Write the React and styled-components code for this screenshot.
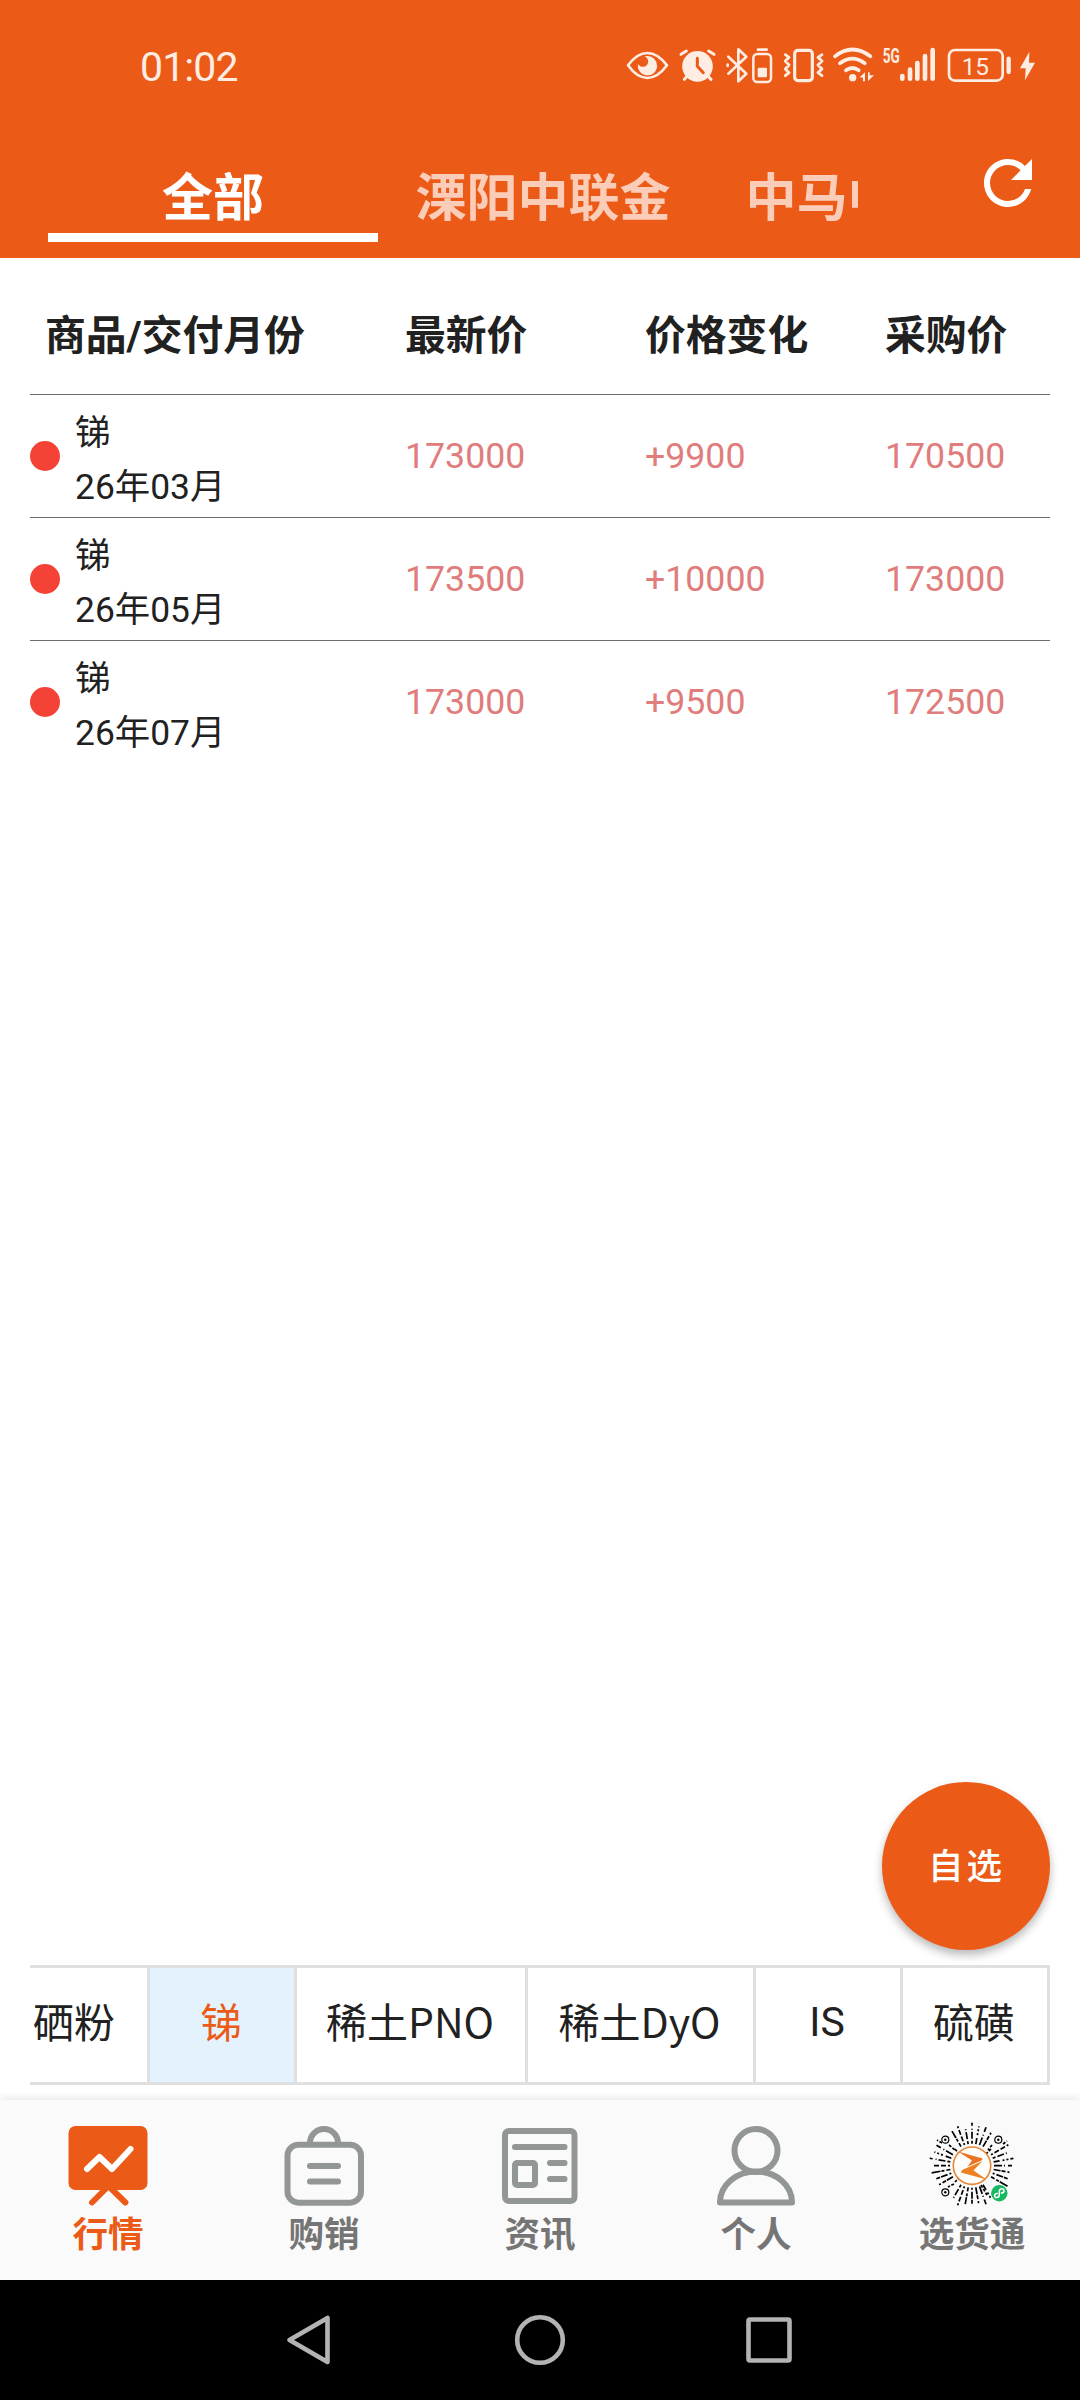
import styled, { createGlobalStyle, ThemeProvider } from 'styled-components';

const theme = {
  primary: '#eb5b17',
  statusIcon: '#ffece2',
  text: '#212121',
  price: '#e07c7c',
  dot: '#f44336',
  divider: '#6c6c6c',
  border: '#e0e0e0',
  selected: '#e3f2fd',
  navBackground: '#fafafa',
  navText: '#757575',
  navIcon: '#929796',
  fonts: {
    main: "Roboto, 'Noto Sans CJK SC', sans-serif",
    cjk: "'Noto Sans CJK SC', sans-serif",
  },
};

const GlobalStyle = createGlobalStyle`
  * {
    box-sizing: border-box;
  }

  body {
    margin: 0;
    background: #fff;
  }
`;

const Screen = styled.div`
  position: relative;
  width: 1080px;
  height: 2400px;
  display: flex;
  flex-direction: column;
  overflow: hidden;
  background: #fff;
  color: ${({ theme }) => theme.text};
  font-family: ${({ theme }) => theme.fonts.main};
`;

const Header = styled.header`
  height: 258px;
  flex: none;
  display: flex;
  flex-direction: column;
  background: ${({ theme }) => theme.primary};
`;

const StatusBar = styled.div`
  height: 130px;
  display: flex;
  align-items: center;
  justify-content: space-between;
  padding: 0 40px 0 140px;
  color: ${({ theme }) => theme.statusIcon};
`;

const Clock = styled.span`
  font-size: 41px;
  letter-spacing: -0.9px;
  line-height: 48px;
  padding-top: 4px;
`;

const StatusIcons = styled.div`
  display: flex;
  align-items: center;
`;

const StatusSvg = styled.svg`
  display: block;
  height: 40px;
  fill: none;
  stroke: currentColor;
  stroke-linecap: round;
  stroke-linejoin: round;
`;

const TabRow = styled.div`
  flex: 1;
  display: flex;
  justify-content: space-between;
  padding: 0 36px 16px 48px;
`;

const Tabs = styled.nav`
  width: 810px;
  display: flex;
  overflow: hidden;
`;

const Tab = styled.button`
  flex: none;
  min-width: ${({ $active }) => ($active ? '330px' : '0')};
  padding: 24px 37.5px 0;
  border: 0;
  border-bottom: 9px solid ${({ $active }) => ($active ? '#fff' : 'transparent')};
  background: none;
  color: ${({ $active }) => ($active ? '#fff' : '#fbcdb8')};
  font: 700 51px/70px ${({ theme }) => theme.fonts.cjk};
  white-space: nowrap;
`;

const RefreshButton = styled.button`
  width: 72px;
  height: 72px;
  margin-top: 17px;
  padding: 0;
  border: 0;
  background: none;
  color: #fff;
`;

const Quotes = styled.main`
  flex: 1;
  padding: 0 30px;
`;

const QuoteGrid = styled.div`
  display: grid;
  grid-template-columns: 375px 240px 240px 1fr;
  align-items: center;
`;

const QuoteHeader = styled(QuoteGrid)`
  height: 136px;
  padding-top: 19px;
  font: 700 40.8px/60px ${({ theme }) => theme.fonts.main};
`;

const HeaderCell = styled.span`
  padding-left: ${({ $first }) => ($first ? '15px' : '0')};
`;

const QuoteRow = styled(QuoteGrid)`
  height: 123px;
  border-top: 1px solid ${({ theme }) => theme.divider};
  font-size: 35.7px;
`;

const Product = styled.div`
  display: flex;
  align-items: center;
  gap: 15px;
`;

const Dot = styled.span`
  width: 30px;
  height: 30px;
  border-radius: 50%;
  background: ${({ theme }) => theme.dot};
`;

const ProductText = styled.div`
  padding-top: 8px;
  font-size: 35.4px;
  line-height: 54px;
`;

const Price = styled.span`
  color: ${({ theme }) => theme.price};
`;

const WatchButton = styled.button`
  position: absolute;
  right: 30px;
  bottom: 450px;
  width: 168px;
  height: 168px;
  padding: 0 0 4px 1px;
  border: 0;
  border-radius: 50%;
  background: ${({ theme }) => theme.primary};
  box-shadow: 0 5px 10px rgba(0, 0, 0, 0.28);
  color: #fff;
  font: 500 35.5px/54px ${({ theme }) => theme.fonts.cjk};
  letter-spacing: 3px;
`;

const Categories = styled.div`
  height: 120px;
  flex: none;
  display: flex;
  justify-content: flex-end;
  margin: 0 30px 15px;
  overflow: hidden;
  border: solid ${({ theme }) => theme.border};
  border-width: 3px 0;
`;

const Category = styled.button`
  flex: none;
  width: ${({ $wide }) => $wide || 147}px;
  padding: 0 2px ${({ $latin }) => ($latin ? '6px' : '11px')} 0;
  border: 0;
  border-right: 3px solid ${({ theme }) => theme.border};
  background: ${({ theme, $selected }) => ($selected ? theme.selected : '#fff')};
  color: ${({ theme, $selected }) => ($selected ? theme.primary : theme.text)};
  font: 400 41px/60px ${({ theme, $latin }) => ($latin ? theme.fonts.main : theme.fonts.cjk)};
  white-space: nowrap;
`;

const BottomNav = styled.nav`
  height: 180px;
  flex: none;
  display: grid;
  grid-template-columns: repeat(5, 1fr);
  background: ${({ theme }) => theme.navBackground};
  box-shadow: 0 -2px 8px rgba(0, 0, 0, 0.1);
`;

const NavItem = styled.a`
  display: flex;
  flex-direction: column;
  align-items: center;
  padding-top: 21px;
  color: ${({ theme, $active }) => ($active ? theme.primary : theme.navText)};
  font: 700 35.6px/54px ${({ theme }) => theme.fonts.cjk};
`;

const NavSvg = styled.svg`
  width: 90px;
  height: 90px;
  flex: none;
  margin-bottom: -6px;
  fill: none;
  stroke: ${({ theme }) => theme.navIcon};
  stroke-width: 6;
  stroke-linecap: round;
  stroke-linejoin: round;
`;

const SystemNav = styled.div`
  height: 120px;
  flex: none;
  display: flex;
  align-items: center;
  justify-content: center;
  gap: 169px;
  background: #000;
`;

const SystemSvg = styled.svg`
  width: 60px;
  height: 60px;
  fill: none;
  stroke: #b3b3b3;
  stroke-width: 4.6;
  stroke-linejoin: round;
`;

const StatusIcon = ({ x, width, children }) => (
  <StatusSvg viewBox={`${x} 75 ${width} 120`} width={width / 3}>
    {children}
  </StatusSvg>
);

const StatusGlyphs = () => (
  <StatusIcons>
    <StatusIcon x={78} width={144}>
      <path d="M84 136Q111 99 142 99T201 136Q173 174 142 174T84 136Z" strokeWidth="8" />
      <path d="M142 108A29 29 0 1 1 114 131A16 16 0 1 0 133 109Q137 108 142 108Z" fill="currentColor" stroke="none" />
    </StatusIcon>
    <StatusIcon x={222} width={144}>
      <circle cx="292.5" cy="139" r="46" fill="currentColor" stroke="none" />
      <path d="M243 103L259 93M326 93L342 103M253 178L262 168M323 168L333 178" strokeWidth="9" />
      <path d="M292 115V139L310 158" stroke="#eb5b17" strokeWidth="9" />
    </StatusIcon>
    <StatusIcon x={366} width={168}>
      <path d="M385 161L439 110L415 88V184L439 161L385 110M383 134V138" strokeWidth="8" />
      <rect x="460" y="102" width="53" height="84" rx="12" strokeWidth="7.5" />
      <path d="M474 89H500" strokeWidth="8" />
      <rect x="473" y="143" width="28" height="29" rx="4" fill="currentColor" stroke="none" />
    </StatusIcon>
    <StatusIcon x={534} width={150}>
      <rect x="584" y="91" width="53" height="91" rx="10" strokeWidth="9.5" />
      <path d="M556 104L567 112L556 123L567 135L556 147L567 158L556 167M666 104L654 112L666 123L654 135L666 147L654 158L666 167" strokeWidth="8.5" />
    </StatusIcon>
    <StatusIcon x={684} width={150}>
      <path d="M705 109Q757 68 811 109M720 130Q757 102 794 130M738 151Q757 137 776 151" strokeWidth="11" />
      <circle cx="758" cy="173" r="11" fill="currentColor" stroke="none" />
      <path d="M779 172L795 157V184H789V173ZM804 157H809V166H822L804 183Z" fill="currentColor" stroke="none" />
    </StatusIcon>
    <StatusIcon x={834} width={192}>
      <text
        x="848"
        y="129"
        fill="currentColor"
        stroke="none"
        fontFamily="Roboto"
        fontWeight="700"
        fontSize="60"
        textLength="51"
        lengthAdjust="spacingAndGlyphs"
      >
        5G
      </text>
      <path d="M907 168V176M930 149V176M952 129V176M975 108V176M998 90V176" strokeWidth="14" />
    </StatusIcon>
    <StatusIcon x={1026} width={216}>
      <rect x="1047" y="90" width="161" height="92" rx="18" strokeWidth="8" />
      <path d="M1226 116V156" strokeWidth="13" />
      <text x="1126" y="165" fill="currentColor" stroke="none" fontFamily="Roboto" fontSize="73" textAnchor="middle">
        15
      </text>
    </StatusIcon>
    <StatusIcon x={1242} width={78}>
      <path d="M1288 95L1260 145H1277L1275 181L1305 128H1287Z" fill="currentColor" stroke="none" />
    </StatusIcon>
  </StatusIcons>
);

const MarketIcon = () => (
  <NavSvg viewBox="-3 -3 90 90">
    <rect x="2.5" y="2" width="79" height="64" rx="7" fill="#eb5b17" stroke="none" />
    <path d="M42.500 62L26 78.500M42.500 62L59.400 78.500" stroke="#eb5b17" />
    <path d="M21 45L33.500 33L46 45L64.500 25" stroke="#fff" />
  </NavSvg>
);

const TradeIcon = () => (
  <NavSvg viewBox="-3 -3 90 90">
    <rect x="5.5" y="20.7" width="73.5" height="58" rx="11" />
    <path d="M28 20V19a14 14 0 0 1 28 0V20M28 42H56M28 57.500H56" />
  </NavSvg>
);

const NewsIcon = () => (
  <NavSvg viewBox="-3 -3 90 90">
    <rect x="7" y="7" width="69.5" height="70" rx="4" />
    <rect x="17" y="39" width="20" height="22" rx="2" />
    <path d="M17 23H66.500M52 39H66.500M52 55H66.500" />
  </NavSvg>
);

const ProfileIcon = () => (
  <NavSvg viewBox="-3 -3 90 90">
    <circle cx="42" cy="26.5" r="21.5" />
    <path d="M6 78.500C6 61 22 47.500 42 47.500S78 61 78 78.500Z" />
  </NavSvg>
);

// Dash patterns of the mini program code, repeated around the circle
const rayDashes = [
  '3 2 7 2 1 3 6 9',
  '7 1 4 2 2 9',
  '2 2 5 2 5 2 2 9',
  '8 2 1 3 5 9',
  '4 2 3 1 9 9',
  '6 3 2 2 2 2 3 9',
  '2 2 7 1 4 9',
];

const rays = Array.from({ length: 36 }, (_, i) => ({
  angle: i * 10 - 90,
  length: [21, 17, 20, 18][(i * 3) % 4],
  dash: rayDashes[(i * 5) % 7],
})).filter(({ angle }) => ![-50, -40, -130, 40, 50, 130, 140, 220, 230].includes(angle));

const CodeIcon = () => (
  <NavSvg viewBox="-3 -3 90 90">
    <g stroke="#000" strokeWidth="1.7" strokeLinecap="butt">
      {rays.map(({ angle, length, dash }) => (
        <path
          key={angle}
          d={`M22 0H${22 + length}`}
          strokeDasharray={dash}
          transform={`translate(42 41.7) rotate(${angle})`}
        />
      ))}
      <path d="M19 21L25 26M61 25L55 31M25 25L30 31M62 21L58 26M24 60L18 63M30 53L25 58M51 61L57 71M12 19L7 16M73 20L77 17" strokeDasharray="3 1.5" />
    </g>
    {[[15.3, 15.7], [68.3, 15.7], [15.3, 68.3]].map(([x, y]) => (
      <g key={`${x}-${y}`}>
        <circle cx={x} cy={y} r="3.5" fill="#fafafa" stroke="#000" strokeWidth="1.2" />
        <circle cx={x} cy={y} r="1.2" fill="#000" stroke="none" />
      </g>
    ))}
    <circle cx="42" cy="41.7" r="18.7" fill="#fffdfa" stroke="#e58535" strokeWidth="1.6" />
    <path d="M28 27.500L52.500 34.500L51.500 38L36.500 44L42 36.500Z" fill="#e97424" stroke="none" />
    <path d="M56.500 55.500L31 48.500L32 45.500L52 37.500L43.500 46.500Z" fill="#ed8122" stroke="none" />
    <path d="M31 46L52.500 36.500" stroke="#fff" strokeWidth="1" />
    <circle cx="69.3" cy="69.2" r="8.2" fill="#16b861" stroke="none" />
    <path
      d="M67.300 69.400C63.800 69.200 63.900 73.600 66.600 73.600C68.500 73.600 69.300 72.300 69.300 70.800V67.600C69.300 66 70.200 64.800 72 64.800C74.800 64.800 74.900 69 71.400 69"
      stroke="#fff"
      strokeWidth="1.5"
    />
  </NavSvg>
);

const tabs = ['全部', '溧阳中联金', '中马中联金'];

const quotes = [
  { name: '锑', month: '26年03月', latest: '173000', change: '+9900', buy: '170500' },
  { name: '锑', month: '26年05月', latest: '173500', change: '+10000', buy: '173000' },
  { name: '锑', month: '26年07月', latest: '173000', change: '+9500', buy: '172500' },
];

const categories = [
  { label: '硒粉' },
  { label: '锑', selected: true },
  { label: '稀土PNO', width: 231 },
  { label: '稀土DyO', width: 228 },
  { label: 'IS', latin: true },
  { label: '硫磺' },
];

const navItems = [
  { label: '行情', Icon: MarketIcon, active: true },
  { label: '购销', Icon: TradeIcon },
  { label: '资讯', Icon: NewsIcon },
  { label: '个人', Icon: ProfileIcon },
  { label: '选货通', Icon: CodeIcon },
];

const App = () => (
  <ThemeProvider theme={theme}>
    <GlobalStyle />
    <Screen>
      <Header>
        <StatusBar>
          <Clock>01:02</Clock>
          <StatusGlyphs />
        </StatusBar>
        <TabRow>
          <Tabs>
            {tabs.map((tab, index) => (
              <Tab key={tab} $active={index === 0}>
                {tab}
              </Tab>
            ))}
          </Tabs>
          <RefreshButton aria-label="刷新">
            <svg width="72" height="72" viewBox="0 0 24 24" fill="currentColor">
              <path d="M17.650 6.350A7.958 7.958 0 0 0 12 4c-4.420 0-7.990 3.580-7.990 8s3.570 8 7.990 8c3.730 0 6.840-2.550 7.730-6h-2.080A5.990 5.990 0 0 1 12 18c-3.310 0-6-2.690-6-6s2.690-6 6-6c1.660 0 3.140.690 4.220 1.780L13 11h7V4l-2.350 2.350z" />
            </svg>
          </RefreshButton>
        </TabRow>
      </Header>

      <Quotes>
        <QuoteHeader>
          <HeaderCell $first>商品/交付月份</HeaderCell>
          <HeaderCell>最新价</HeaderCell>
          <HeaderCell>价格变化</HeaderCell>
          <HeaderCell>采购价</HeaderCell>
        </QuoteHeader>
        {quotes.map((quote) => (
          <QuoteRow key={quote.month}>
            <Product>
              <Dot />
              <ProductText>
                <div>{quote.name}</div>
                <div>{quote.month}</div>
              </ProductText>
            </Product>
            <Price>{quote.latest}</Price>
            <Price>{quote.change}</Price>
            <Price>{quote.buy}</Price>
          </QuoteRow>
        ))}
      </Quotes>

      <Categories>
        {categories.map(({ label, selected, width, latin }) => (
          <Category key={label} $selected={selected} $wide={width} $latin={latin}>
            {label}
          </Category>
        ))}
      </Categories>

      <BottomNav>
        {navItems.map(({ label, Icon, active }) => (
          <NavItem key={label} $active={active}>
            <Icon />
            {label}
          </NavItem>
        ))}
      </BottomNav>

      <SystemNav>
        <SystemSvg viewBox="281 2310 60 60">
          <path d="M327.500 2318V2362L289.500 2340Z" />
        </SystemSvg>
        <SystemSvg viewBox="0 0 60 60">
          <circle cx="30" cy="30" r="22.8" />
        </SystemSvg>
        <SystemSvg viewBox="0 0 60 60">
          <rect x="9.5" y="9.5" width="41" height="41" rx="1.5" />
        </SystemSvg>
      </SystemNav>

      <WatchButton>自选</WatchButton>
    </Screen>
  </ThemeProvider>
);

export default App;
